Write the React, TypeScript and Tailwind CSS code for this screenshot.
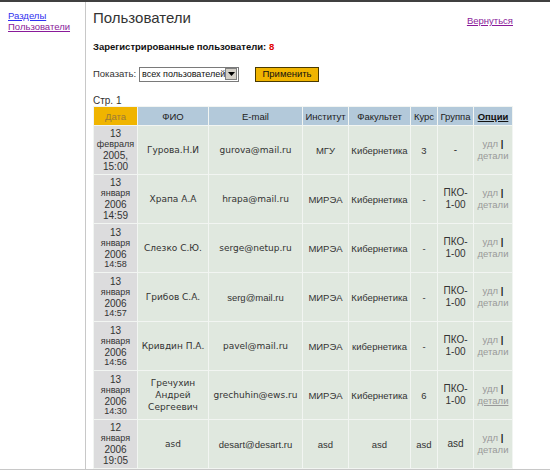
import React from "react";

type Row = {
  day: string;
  month: string;
  year: string;
  time: string;
  small?: boolean;
  name: string[];
  email: string;
  emailAlt?: boolean;
  inst: string;
  fac: string;
  kurs: string;
  group: string[];
  underline?: boolean;
};

const rows: Row[] = [
  { day: "13", month: "февраля", year: "2005,", time: "15:00", name: ["Гурова.Н.И"], email: "gurova@mail.ru", inst: "МГУ", fac: "Кибернетика", kurs: "3", group: ["-"] },
  { day: "13", month: "января", year: "2006", time: "14:59", name: ["Храпа А.А"], email: "hrapa@mail.ru", inst: "МИРЭА", fac: "Кибернетика", kurs: "-", group: ["ПКО-", "1-00"] },
  { day: "13", month: "января", year: "2006", time: "14:58", small: true, name: ["Слезко С.Ю."], email: "serge@netup.ru", inst: "МИРЭА", fac: "Кибернетика", kurs: "-", group: ["ПКО-", "1-00"] },
  { day: "13", month: "января", year: "2006", time: "14:57", small: true, name: ["Грибов С.А."], email: "serg@mail.ru", emailAlt: true, inst: "МИРЭА", fac: "Кибернетика", kurs: "-", group: ["ПКО-", "1-00"] },
  { day: "13", month: "января", year: "2006", time: "14:56", small: true, name: ["Кривдин П.А."], email: "pavel@mail.ru", inst: "МИРЭА", fac: "кибернетика", kurs: "-", group: ["ПКО-", "1-00"] },
  { day: "13", month: "января", year: "2006", time: "14:30", small: true, name: ["Гречухин", "Андрей", "Сергеевич"], email: "grechuhin@ews.ru", inst: "МИРЭА", fac: "Кибернетика", kurs: "6", group: ["ПКО-", "1-00"], underline: true },
  { day: "12", month: "января", year: "2006", time: "19:05", name: ["asd"], email: "desart@desart.ru", emailAlt: true, inst: "asd", fac: "asd", kurs: "asd", group: ["asd"] },
];

const wide = { fontFamily: '"DejaVu Sans", Verdana, sans-serif' };

export default function App() {
  return (
    <div
      className="w-[550px] h-[472px] overflow-hidden bg-white border-t-2 border-[#404040] text-[#333]"
      style={{ fontFamily: '"Liberation Sans", Tahoma, Arial, sans-serif' }}
    >
      <div className="flex h-[468px] border-b border-[#c8c8c8]">
        <div className="w-[86px] shrink-0 border-r border-[#c8c8c8] pl-[8px] pt-[8px] text-[9.5px] leading-[11px]">
          <div><a href="#" className="text-[#3030f0] underline">Разделы</a></div>
          <div><a href="#" className="text-[#8a1a9a] underline">Пользователи</a></div>
        </div>

        <div className="flex-1 pl-[7px] pt-[7px] overflow-hidden">
          <div className="flex items-start justify-between w-[420px]">
            <h1 className="text-[15px] leading-[18px] text-[#333] font-normal">Пользователи</h1>
            <a href="#" className="text-[9.5px] text-[#8a1a9a] underline mt-[5px]">Вернуться</a>
          </div>

          <div className="mt-[13px] text-[9.5px] leading-[12px] font-bold text-[#111]">
            Зарегистрированные пользователи: <span className="text-[#e00000]">8</span>
          </div>

          <div className="mt-[13px] flex items-center text-[9.5px] h-[16px]">
            <span>Показать:</span>
            <div className="ml-[3px] flex items-center w-[100px] h-[15px] border border-[#7a7a7a] bg-white">
              <span className="flex-1 pl-[2px] text-[9px] leading-[13px] text-[#111] whitespace-nowrap overflow-hidden">всех пользователей</span>
              <span className="w-[12px] h-[12px] mr-[1px] bg-[#d4d0c8] border border-[#808080] flex items-center justify-center">
                <svg width="7" height="4" viewBox="0 0 7 4"><path d="M0 0h7L3.5 4z" fill="#000" /></svg>
              </span>
            </div>
            <button className="ml-[16px] w-[64px] h-[15px] bg-[#f0b400] border border-[#4a3a00] text-[9.5px] leading-[12px] text-[#111]">
              Применить
            </button>
          </div>

          <div className="mt-[13px] text-[10px] leading-[11px]">Стр. 1</div>

          <table className="table-fixed border-separate border-spacing-[1px] bg-[#f2f5f2] text-[9.5px] leading-[11px] text-center w-[420px]">
            <colgroup>
              <col className="w-[43px]" />
              <col className="w-[70px]" />
              <col className="w-[93px]" />
              <col className="w-[45px]" />
              <col className="w-[61px]" />
              <col className="w-[26px]" />
              <col className="w-[35px]" />
              <col className="w-[38px]" />
            </colgroup>
            <thead>
              <tr className="h-[18px]">
                <th className="bg-[#f0b400] font-normal text-[#9a7a38] p-0">Дата</th>
                <th className="bg-[#b3c9da] font-normal text-[#222] p-0">ФИО</th>
                <th className="bg-[#b3c9da] font-normal text-[#222] p-0">E-mail</th>
                <th className="bg-[#b3c9da] font-normal text-[#222] p-0">Институт</th>
                <th className="bg-[#b3c9da] font-normal text-[#222] p-0">Факультет</th>
                <th className="bg-[#b3c9da] font-normal text-[#222] p-0">Курс</th>
                <th className="bg-[#b3c9da] font-normal text-[#222] p-0">Группа</th>
                <th className="bg-[#b3c9da] font-bold text-[#111] underline p-0">Опции</th>
              </tr>
            </thead>
            <tbody>
              {rows.map((r, i) => (
                <tr key={i} className="h-[48px]">
                  <td className="bg-[#dcdcdd] p-0 text-[#333]">
                    <div className="text-[10px] leading-[11px]">{r.day}</div>
                    <div className="text-[9px] leading-[11px]">{r.month}</div>
                    <div className="text-[10px] leading-[11px]">{r.year}</div>
                    <div className={r.small ? "text-[9px] leading-[9px]" : "text-[10px] leading-[11px]"}>{r.time}</div>
                  </td>
                  <td className="bg-[#e0e8df] p-0 text-[9px] leading-[12px]" style={wide}>
                    {r.name.map((n, j) => (
                      <div key={j}>{n}</div>
                    ))}
                  </td>
                  <td
                    className={r.emailAlt ? "bg-[#e0e8df] p-0 text-[9.5px]" : "bg-[#e0e8df] p-0 text-[9px]"}
                    style={r.emailAlt ? undefined : wide}
                  >
                    {r.email}
                  </td>
                  <td className="bg-[#e0e8df] p-0">{r.inst}</td>
                  <td className="bg-[#e0e8df] p-0">{r.fac}</td>
                  <td className="bg-[#e0e8df] p-0">{r.kurs}</td>
                  <td className="bg-[#e0e8df] p-0 text-[10px] leading-[12px]">
                    {r.group.map((g, j) => (
                      <div key={j}>{g}</div>
                    ))}
                  </td>
                  <td className="bg-[#e0e8df] p-0 text-[#999] leading-[12px]">
                    <div>
                      удл <span className="text-[#222] font-bold">|</span>
                    </div>
                    <div className={r.underline ? "underline" : ""}>детали</div>
                  </td>
                </tr>
              ))}
            </tbody>
          </table>
        </div>
      </div>
    </div>
  );
}
